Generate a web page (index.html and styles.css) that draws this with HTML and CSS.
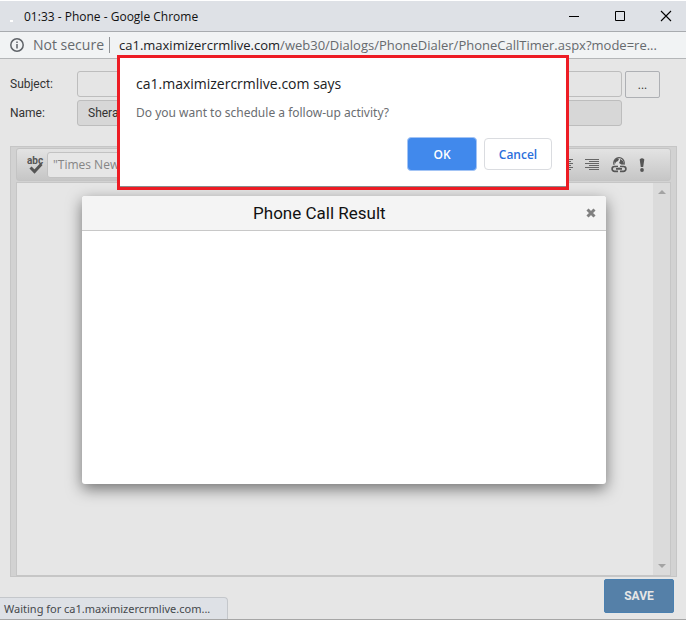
FILE: index.html
```html
<!DOCTYPE html>
<html lang="en">
<head>
<meta charset="utf-8">
<title>01:33 - Phone - Google Chrome</title>
<link rel="stylesheet" href="styles.css">
</head>
<body>
<header class="titlebar">
  <span class="favicon"></span>
  <span class="window-title">01:33 - Phone - Google Chrome</span>
  <div class="window-controls">
    <button type="button" aria-label="Minimize"><svg width="12" height="12" viewBox="0 0 12 12"><path d="M1 6.500h10" stroke="#000"/></svg></button>
    <button type="button" aria-label="Maximize"><svg width="12" height="12" viewBox="0 0 12 12"><path d="M1.500 1.500h9v9h-9z" fill="none" stroke="#000"/></svg></button>
    <button type="button" aria-label="Close"><svg width="12" height="12" viewBox="0 0 12 12"><path d="M1 1l10 10M11 1L1 11" stroke="#000" stroke-width="1.100"/></svg></button>
  </div>
</header>
<div class="addressbar">
  <svg class="info" width="14" height="14" viewBox="0 0 14 14"><circle cx="7" cy="7" r="6.200" fill="none" stroke="#5f6368" stroke-width="1.500"/><path d="M7 6v4.500M7 3.500v1.500" stroke="#5f6368" stroke-width="1.500"/></svg>
  <span class="security">Not secure</span>
  <span class="url"><b>ca1.maximizercrmlive.com</b>/web30/Dialogs/PhoneDialer/PhoneCallTimer.aspx?mode=re...</span>
</div>

<main class="page">
  <form class="call-form">
    <div class="field">
      <label for="subject">Subject:</label>
      <input id="subject" type="text">
      <button class="browse" type="button">...</button>
    </div>
    <div class="field">
      <label for="name">Name:</label>
      <input id="name" class="readonly" type="text" value="Shera" readonly>
    </div>
    <section class="editor">
      <div class="toolbar">
        <button type="button" aria-label="Spell check"><svg width="18" height="18" viewBox="0 0 18 18"><text class="abc" x="0" y="8">abc</text><path d="M3.500 11.500l4 4 7-7.500" fill="none" stroke="#555" stroke-width="3"/></svg></button>
        <input class="font-name" type="text" aria-label="Font" value='"Times New Roman"'>
        <div class="tools">
          <button type="button" aria-label="Align center"><svg width="14" height="12" viewBox="0 0 14 12"><path d="M0 .5h14M2 2.500h10M0 4.500h14M2 6.500h10M0 8.500h14M2 10.500h10" stroke="#666"/></svg></button>
          <button type="button" aria-label="Align right"><svg width="14" height="12" viewBox="0 0 14 12"><path d="M0 .5h14M4 2.500h10M0 4.500h14M4 6.500h10M0 8.500h14M4 10.500h10" stroke="#666"/></svg></button>
          <button type="button" aria-label="Insert link"><svg width="16" height="16" viewBox="0 0 16 16"><circle cx="8" cy="6" r="5.300" fill="#ddd" stroke="#555" stroke-width="1.200"/><path d="M3 4l3-3 2 1-1 2-2 1-1 2zM9 2l3 2 1 3-2 1-3-2 1-2z" fill="#555"/><path d="M7 9.500H3.500a2.200 2.200 0 000 4.800H7M9 9.500h3.500a2.200 2.200 0 010 4.800H9" fill="none" stroke="#d3d3d3" stroke-width="3.600"/><path d="M7 9.500H3.500a2.200 2.200 0 000 4.800H7M9 9.500h3.500a2.200 2.200 0 010 4.800H9M5 11.900h6" fill="none" stroke="#555" stroke-width="1.700"/></svg></button>
          <button type="button" aria-label="High importance"><svg width="6" height="14" viewBox="0 0 6 14"><path d="M.7 1.500Q3-.8 5.300 1.500L4.200 9H1.800z" fill="#555"/><circle cx="3" cy="12" r="1.900" fill="#555"/></svg></button>
        </div>
      </div>
      <div class="document">
        <div class="scrollbar">
          <svg width="8" height="4" viewBox="0 0 8 4"><path d="M0 4l4-4 4 4z" fill="#a3a3a3"/></svg>
          <svg width="8" height="4" viewBox="0 0 8 4"><path d="M0 0l4 4 4-4z" fill="#a3a3a3"/></svg>
        </div>
      </div>
    </section>
    <button class="save" type="button">SAVE</button>
  </form>
</main>

<div class="status">Waiting for ca1.maximizercrmlive.com...</div>

<section class="result" role="dialog" aria-labelledby="result-title">
  <header class="result-head">
    <h2 id="result-title">Phone Call Result</h2>
    <button type="button" aria-label="Close dialog"><svg width="10" height="10" viewBox="0 0 10 10"><path d="M1.500 1.500l7 7M8.500 1.500l-7 7" stroke="#808080" stroke-width="3"/></svg></button>
  </header>
</section>

<section class="alert" role="alertdialog" aria-labelledby="alert-title">
  <h1 id="alert-title">ca1.maximizercrmlive.com says</h1>
  <p>Do you want to schedule a follow-up activity?</p>
  <div class="actions">
    <button class="ok" type="button">OK</button>
    <button class="cancel" type="button">Cancel</button>
  </div>
</section>
</body>
</html>
```
FILE: styles.css
```css
* { box-sizing: border-box; }
body {
  margin: 0;
  min-height: 100vh;
  display: flex;
  flex-direction: column;
  position: relative;
  overflow: hidden;
  background: #e6e6e6;
  border-top: 1px solid #fff;
  border-bottom: 1px solid #a6a6a6;
  font-family: "Open Sans", "Noto Sans", sans-serif;
  font-size: 12px;
  color: #333;
}
button, input { font: inherit; margin: 0; padding: 0; }
button { display: flex; align-items: center; justify-content: center; border: 0; background: none; }
svg { display: block; }

.titlebar {
  height: 31px;
  display: flex;
  align-items: center;
  background: #dee1e6;
  border-bottom: 1px solid #a8abaf;
  color: #111;
}
.favicon { width: 3px; height: 2px; margin: 10px 11px 0 10px; background: #fff; }
.window-controls { margin-left: auto; display: flex; }
.window-controls button { width: 46px; height: 28px; }
.window-controls button:last-child { width: 46px; margin-right: -3px; }

.addressbar {
  height: 27px;
  display: flex;
  align-items: center;
  padding: 0 10px;
  background: #f1f3f4;
  border-bottom: 1px solid #b4b6b8;
  font-size: 14px;
  color: #666a6e;
  white-space: nowrap;
}
.security { margin-left: 9px; padding-right: 5px; line-height: 16px; border-right: 1px solid #909396; }
.url { margin-left: 9px; overflow: hidden; font-size: 13px; }
.url b { font-weight: 400; color: #202124; }

.page { flex: 1; display: flex; padding: 12px 9px 6px 10px; }
.call-form { flex: 1; display: flex; flex-direction: column; gap: 2px; }
.field { display: flex; align-items: flex-start; font-family: Roboto, sans-serif; }
.field label { width: 67px; line-height: 26px; }
.field input {
  flex: 1;
  min-width: 0;
  height: 26px;
  padding: 0 10px;
  border: 1px solid #bdbdbd;
  border-radius: 3px;
  background: #e5e5e5;
  color: #333;
}
.field .readonly { background: #d7d7d7; margin-right: 55px; }
.browse { width: 35px; height: 27px; margin: 0 17px 0 3px; border: 1px solid #aeb0b4; border-radius: 2px; color: #333; }

.editor {
  flex: 1;
  margin-top: 18px;
  display: flex;
  flex-direction: column;
  padding: 1px 5px 0;
  background: #d2d2d2;
  border: 1px solid #c6c6c6;
}
.toolbar {
  height: 33px;
  display: flex;
  align-items: center;
  padding: 0 25px 0 10px;
  border: 1px solid #c4c4c4;
  border-radius: 3px;
  background: linear-gradient(#e3e3e3, #c6c6c6);
}
.abc { font: bold 10px Roboto, sans-serif; fill: #555; }
.font-name {
  width: 110px;
  height: 26px;
  margin-left: 2px;
  padding: 0 5px;
  border: 1px solid #c2c2c2;
  border-radius: 3px;
  background: #e6e6e6;
  color: #858585;
}
.tools { margin-left: auto; display: flex; align-items: center; gap: 12px; }
.document {
  flex: 1;
  display: flex;
  justify-content: flex-end;
  margin-top: 1px;
  border: 1px solid #c6c6c6;
  background: #e6e6e6;
}
.scrollbar {
  width: 17px;
  display: flex;
  flex-direction: column;
  justify-content: space-between;
  align-items: center;
  padding: 7px;
  background: #dbdbdb;
}
.save {
  align-self: flex-end;
  width: 70px;
  height: 34px;
  margin-right: 3px;
  border: 1px solid #4a80b0;
  border-radius: 2px;
  background: #5580a8;
  color: #e6e6e6;
  font-family: Roboto, sans-serif;
  font-weight: 700;
}

.status {
  position: absolute;
  left: 0;
  bottom: 0;
  width: 228px;
  height: 22px;
  padding-left: 4px;
  line-height: 22px;
  font-family: "Noto Sans", sans-serif;
  font-size: 11px;
  background: #dee1e6;
  border: 1px solid #c4c7cb;
  border-width: 1px 1px 0 0;
  border-radius: 0 4px 0 0;
  color: #45484c;
  white-space: nowrap;
}

.result {
  position: absolute;
  top: 195px;
  left: 12%;
  width: 524px;
  height: 288px;
  background: #fff;
  border-radius: 3px;
  box-shadow: 0 5px 15px rgba(0, 0, 0, 0.5);
}
.result-head {
  height: 35px;
  display: flex;
  align-items: center;
  background: #f4f4f4;
  border-bottom: 1px solid #c8c8c8;
  border-radius: 3px 3px 0 0;
}
.result-head h2 {
  flex: 1;
  margin: 0;
  padding-right: 20px;
  text-align: center;
  font: 400 17px Roboto, sans-serif;
  color: #111;
}
.result-head button { width: 30px; height: 34px; }

.alert {
  position: absolute;
  top: 54px;
  left: 50%;
  width: 452px;
  margin-left: -226px;
  padding: 16px 14px 16px 16px;
  background: #fff;
  border: 3px solid #ed1c24;
  box-shadow: inset 0 -1px #8c8c8c;
}
.alert h1 { margin: 0; font-size: 14px; line-height: 20px; font-weight: 400; color: #202124; }
.alert p { margin: 10px 0 15px; line-height: 18px; font-family: "Noto Sans", sans-serif; color: #6a6d71; }
.actions { display: flex; align-items: center; justify-content: flex-end; gap: 7px; }
.actions button { width: 68px; height: 32px; border: 1px solid #dadce0; border-radius: 4px; font-weight: 600; color: #2b6fdb; }
.actions .ok { width: 70px; height: 34px; border: 1px solid #a3c4f5; background: #4189ec; color: #fff; }
```
